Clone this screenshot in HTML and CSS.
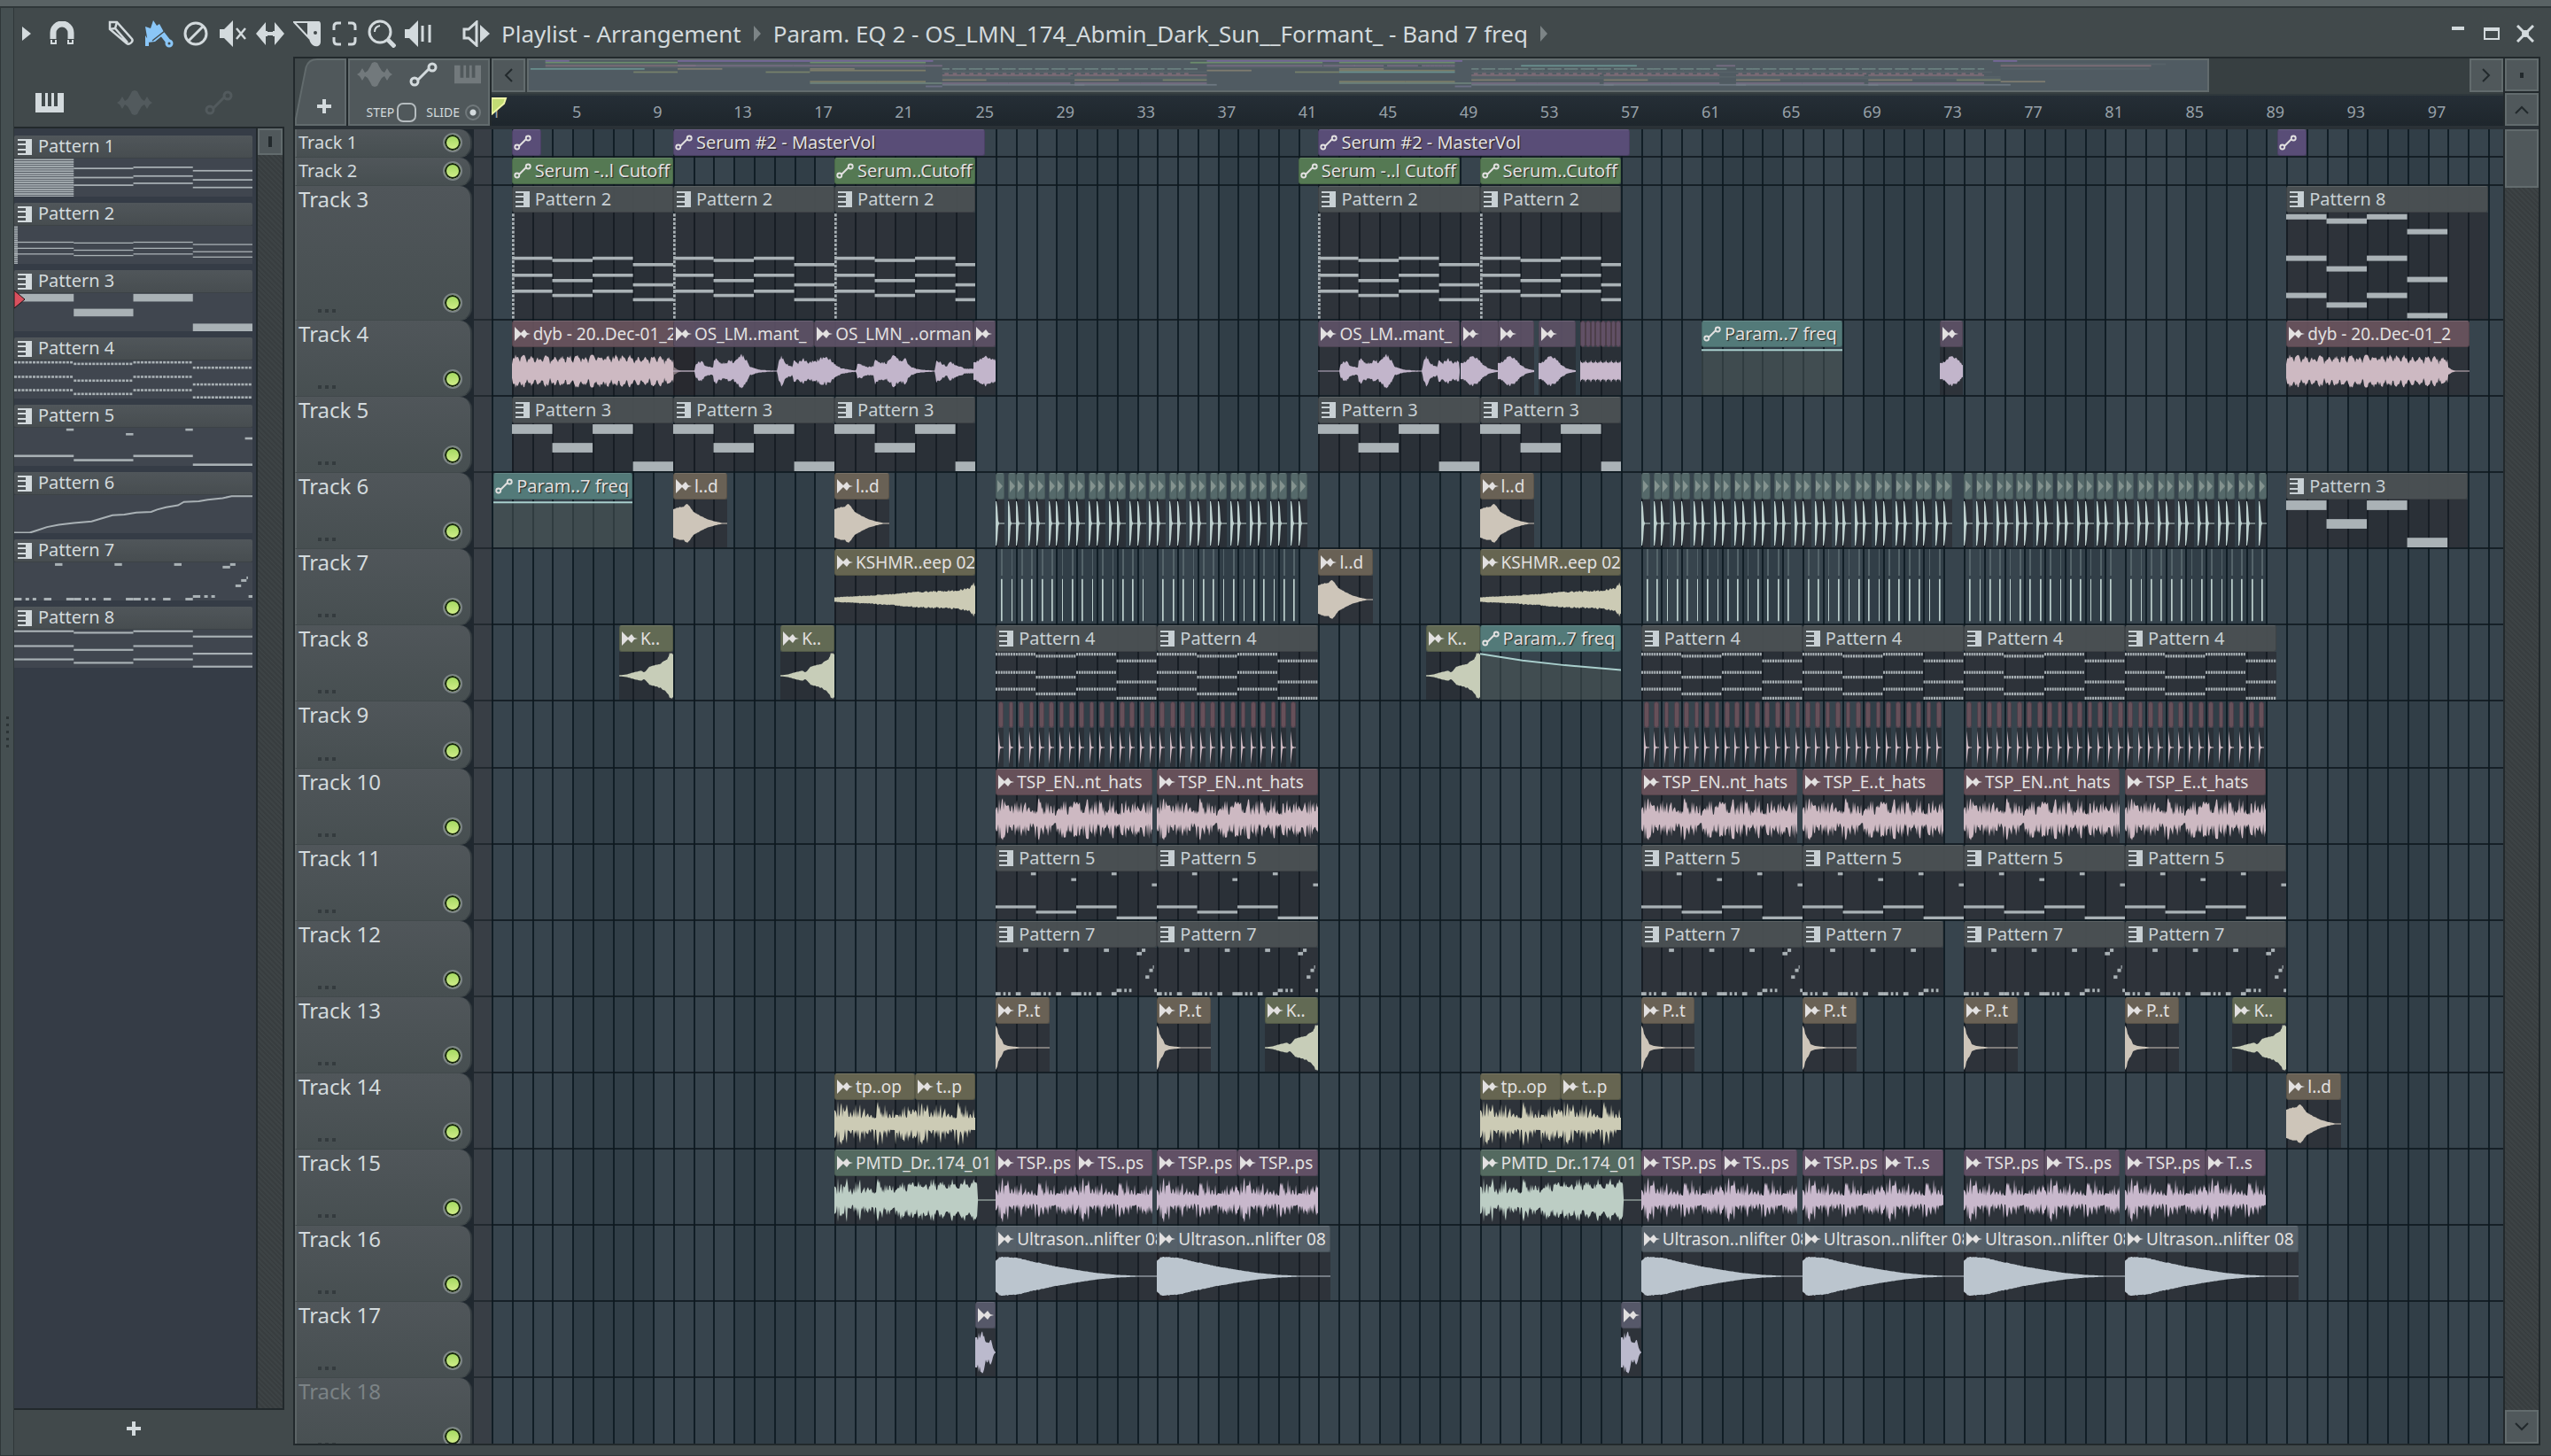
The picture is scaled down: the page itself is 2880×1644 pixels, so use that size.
FILE: index.html
```html
<!DOCTYPE html>
<html lang="en">
<head>
    <meta charset="UTF-8">
    <meta name="viewport" content="width=device-width, initial-scale=1.0">
    <title>Playlist - Arrangement</title>
    <link rel="stylesheet" href="styles.css">
</head>
<body>

<!-- Shared icons -->
<svg class="sprite" aria-hidden="true">
    <symbol id="i-auto" viewBox="0 0 32 28">
        <path d="M10 20L22 8" fill="none" stroke="currentColor" stroke-width="3"/>
        <circle cx="6" cy="22" r="4" fill="none" stroke="currentColor" stroke-width="3"/>
        <circle cx="26" cy="6" r="4" fill="none" stroke="currentColor" stroke-width="3"/>
    </symbol>
    <symbol id="i-piano" viewBox="0 0 32 22">
        <path d="M0 0h7v15h4V0h3v15h4V0h3v15h4V0h7v22H0z" fill="currentColor"/>
    </symbol>
    <symbol id="i-wave" viewBox="0 0 40 28">
        <path d="M0 14l3-2 3-5 3 5 3-2 3-5 2-4 3-1 3 1 2 4 3 5 3 2 3-5 3 5 3 2-3 2-3 5-3-5-3 2-3 5-2 4-3 1-3-1-2-4-3-5-3-2-3 5-3-5z" fill="currentColor"/>
    </symbol>
    <symbol id="i-keys" viewBox="0 0 16 18">
        <path d="M0 0h16v18H0v-2h9v-3H0v-2h9V7H0V5h9V2H0z" fill="currentColor"/>
    </symbol>
    <symbol id="i-clip" viewBox="0 0 18 16">
        <path d="M0 0l6 6 1 1 4-4 3 4 4 1-4 1-3 4-4-4-1 1-6 6z" fill="currentColor"/>
    </symbol>
</svg>

<div class="host-strip"></div>

<main class="window">
    <div class="edge"><i></i><i></i><i></i><i></i><i></i></div>
    <div class="window-body">

        <header class="titlebar">
            <button class="tool menu" aria-label="Menu"><svg width="10" height="16" viewBox="0 0 10 16"><path d="M0 0l10 8-10 8z" fill="currentColor"/></svg></button>
            <button class="tool snap" aria-label="Snap"><svg width="28" height="28" viewBox="0 0 28 28"><path d="M4 20V13a10 10 0 0 1 20 0v7" fill="none" stroke="currentColor" stroke-width="7"/><path d="M2 21v4h5v-4M21 21v4h5v-4" fill="none" stroke="currentColor" stroke-width="2"/></svg></button>
            <div class="tools">
                <button class="tool" aria-label="Draw"><svg width="30" height="30" viewBox="0 0 30 30"><path d="M2 2h8l17 19c2 3-3 7-6 5L2 10zM2 10l6-1 2-7M8 9l14 16" fill="none" stroke="currentColor" stroke-width="2.500"/></svg></button>
                <button class="tool active" aria-label="Paint"><svg width="34" height="32" viewBox="0 0 34 32"><path d="M2 8l6 2 3-9 4 6 3-2 6 11-11 9-8 1zM2 18l4 6v6H2z" fill="currentColor"/><path d="M21 16l7 9" stroke="currentColor" stroke-width="6"/><circle cx="29" cy="27" r="3" fill="none" stroke="currentColor" stroke-width="3"/><path d="M10 24l14-11" stroke="#41494b" stroke-width="1.500"/></svg></button>
                <button class="tool" aria-label="Delete"><svg width="30" height="30" viewBox="0 0 30 30"><circle cx="15" cy="15" r="12" fill="none" stroke="currentColor" stroke-width="3"/><path d="M7 23L23 7" stroke="currentColor" stroke-width="3"/></svg></button>
                <button class="tool" aria-label="Mute"><svg width="32" height="30" viewBox="0 0 32 30"><path d="M1 10h5L16 0v30L6 20H1z" fill="currentColor"/><path d="M20 9l10 12M30 9L20 21" stroke="currentColor" stroke-width="2.500"/></svg></button>
                <button class="tool" aria-label="Slip"><svg width="32" height="28" viewBox="0 0 32 28"><path d="M0 14L11 1v10h2v6h-2v10zM32 14L21 1v10h-2v6h2v10z" fill="currentColor"/><path d="M11 14h10" stroke="currentColor" stroke-width="4"/></svg></button>
                <button class="tool" aria-label="Slice"><svg width="32" height="30" viewBox="0 0 32 30"><path d="M1 2l16 17V2z" fill="none" stroke="currentColor" stroke-width="2"/><path d="M17 1h11c3 0 3 2 3 5v18c0 7-9 7-12 0l-2-6z" fill="currentColor"/><circle cx="25" cy="14" r="2" fill="#41494b"/></svg></button>
                <button class="tool" aria-label="Select"><svg width="28" height="28" viewBox="0 0 28 28"><path d="M2 10V6q0-4 4-4h4M18 2h4q4 0 4 4v4M26 18v4q0 4-4 4h-4M10 26H6q-4 0-4-4v-4" fill="none" stroke="currentColor" stroke-width="3"/></svg></button>
                <button class="tool" aria-label="Zoom"><svg width="32" height="32" viewBox="0 0 32 32"><circle cx="14" cy="14" r="12" fill="none" stroke="currentColor" stroke-width="3"/><path d="M23 23l8 8" fill="none" stroke="currentColor" stroke-width="5"/><path d="M8 14q0-6 6-7" fill="none" stroke="currentColor" stroke-width="2"/></svg></button>
                <button class="tool" aria-label="Playback"><svg width="32" height="30" viewBox="0 0 32 30"><path d="M0 10h5L15 0v30L5 20H0z" fill="currentColor"/><path d="M20 6v18M28 5v20" stroke="currentColor" stroke-width="3"/></svg></button>
            </div>
            <button class="tool play" aria-label="Arrangement menu"><svg width="32" height="30" viewBox="0 0 32 30"><path d="M2 10h5l9-8v26l-9-8H2z" fill="none" stroke="currentColor" stroke-width="3"/><path d="M20 5l11 10-11 10z" fill="currentColor"/></svg></button>
            <h1 class="crumbs">
                <span>Playlist - Arrangement</span>
                <i class="crumb-arrow"></i>
                <span>Param. EQ 2 - OS_LMN_174_Abmin_Dark_Sun__Formant_ - Band 7 freq</span>
                <i class="crumb-arrow"></i>
            </h1>
            <div class="window-buttons">
                <button class="tool" aria-label="Minimize"><svg width="20" height="20" viewBox="0 0 20 20"><path d="M3 4h14" stroke="currentColor" stroke-width="4"/></svg></button>
                <button class="tool" aria-label="Maximize"><svg width="20" height="20" viewBox="0 0 20 20"><path d="M2 4h16v12H2z" fill="none" stroke="currentColor" stroke-width="2"/><path d="M1 5h18" stroke="currentColor" stroke-width="4"/></svg></button>
                <button class="tool" aria-label="Close"><svg width="20" height="20" viewBox="0 0 20 20"><path d="M1 1l18 18M19 1L1 19" stroke="currentColor" stroke-width="3"/><circle cx="10" cy="10" r="4" fill="currentColor"/></svg></button>
            </div>
        </header>

        <div class="workspace">
            <aside class="picker">
                <div class="picker-tabs">
                    <button class="tool" aria-label="Patterns"><svg width="32" height="22"><use href="#i-piano"/></svg></button>
                    <button class="tool dim" aria-label="Audio"><svg width="40" height="28"><use href="#i-wave"/></svg></button>
                    <button class="tool dim" aria-label="Automation"><svg width="32" height="28"><use href="#i-auto"/></svg></button>
                </div>
                <div class="picker-main">
                    <ul class="pattern-list" id="pattern-list"></ul>
                    <div class="scrollbar">
                        <div class="thumb small"><i></i></div>
                    </div>
                </div>
                <button class="tool add-pattern" aria-label="Add pattern"><svg width="16" height="16" viewBox="0 0 16 16"><path d="M8 0v16M0 8h16" stroke="currentColor" stroke-width="4"/></svg></button>
            </aside>

            <section class="playlist">
                <div class="playlist-top">
                    <div class="corner">
                        <button class="add-track" aria-label="Add track">
                            <svg class="tab-shape" viewBox="0 0 60 78" preserveAspectRatio="none"><path d="M1 78V70L13 10Q16 1 26 1H59V77H1z" fill="#50585b" stroke="#626b6d" stroke-width="2"/></svg>
                            <svg class="plus" width="16" height="16" viewBox="0 0 16 16"><path d="M8 0v16M0 8h16" stroke="currentColor" stroke-width="4"/></svg>
                        </button>
                        <div class="clip-tools">
                            <div class="clip-kinds">
                                <button class="tool dim" aria-label="Audio clips"><svg width="40" height="28"><use href="#i-wave"/></svg></button>
                                <button class="tool" aria-label="Automation clips"><svg width="32" height="28"><use href="#i-auto"/></svg></button>
                                <button class="tool dim" aria-label="Pattern clips"><svg width="30" height="22"><use href="#i-piano"/></svg></button>
                            </div>
                            <div class="clip-options">
                                <label for="step">STEP</label>
                                <input type="checkbox" id="step" class="step-box">
                                <label for="slide">SLIDE</label>
                                <input type="checkbox" id="slide" class="slide-box" checked>
                            </div>
                        </div>
                    </div>
                    <div class="timeline-head">
                        <div class="nav-row">
                            <button class="nav-btn" aria-label="Scroll left"><svg width="12" height="18" viewBox="0 0 12 18"><path d="M10 2L3 9l7 7" fill="none" stroke="currentColor" stroke-width="2"/></svg></button>
                            <div class="minimap-wrap"><svg class="minimap" id="minimap" preserveAspectRatio="none"></svg></div>
                            <button class="nav-btn" aria-label="Scroll right"><svg width="12" height="18" viewBox="0 0 12 18"><path d="M2 2l7 7-7 7" fill="none" stroke="currentColor" stroke-width="2"/></svg></button>
                        </div>
                        <div class="ruler" id="ruler">
                            <svg class="playhead" width="18" height="20" viewBox="0 0 18 20"><path d="M0 1h16l-2 6L0 19z" fill="#c3dc74" stroke="#f0f5a8" stroke-width="2"/></svg>
                        </div>
                    </div>
                    <div class="scroll-head">
                        <button class="nav-btn" aria-label="Playlist size"><i class="dot"></i></button>
                        <button class="nav-btn" aria-label="Scroll up"><svg width="18" height="12" viewBox="0 0 18 12"><path d="M2 10l7-7 7 7" fill="none" stroke="currentColor" stroke-width="2"/></svg></button>
                    </div>
                </div>

                <div class="playlist-main">
                    <div class="tracks">
                        <div class="grid" id="grid"></div>
                        <div id="tracks"></div>
                    </div>
                    <div class="scrollbar wide">
                        <div class="thumb"></div>
                        <button class="nav-btn" aria-label="Scroll down"><svg width="18" height="12" viewBox="0 0 18 12"><path d="M2 2l7 7 7-7" fill="none" stroke="currentColor" stroke-width="2"/></svg></button>
                    </div>
                </div>
            </section>
        </div>
    </div>
</main>

<script src="script.js"></script>
</body>
</html>
```

FILE: styles.css
```css
* {
    box-sizing: border-box;
}

body {
    margin: 0;
    height: 100vh;
    display: flex;
    flex-direction: column;
    overflow: hidden;
    background: #41494b;
    color: #d3dadd;
    font-family: "Noto Sans", sans-serif;
    font-size: 20px;
}

button {
    padding: 0;
    border: none;
    background: none;
    color: inherit;
    font: inherit;
    cursor: pointer;
}

svg {
    display: block;
}

.sprite {
    position: absolute;
    width: 0;
    height: 0;
}

.host-strip {
    height: 9px;
    background: #596264;
    border-bottom: 2px solid #2f3739;
}

.window {
    flex: 1;
    min-height: 0;
    display: flex;
    border-left: 1px solid #2f3739;
    border-bottom: 1px solid #2f3739;
}

.edge {
    width: 15px;
    display: flex;
    flex-direction: column;
    justify-content: center;
    align-items: center;
    gap: 5px;
    background: #454f51;
    border-right: 1px solid #2f3739;
}

.edge i {
    width: 3px;
    height: 3px;
    background: #2c3436;
}

.window-body {
    flex: 1;
    min-width: 0;
    display: flex;
    flex-direction: column;
}

/* Title bar */
.titlebar {
    height: 55px;
    display: flex;
    align-items: center;
    padding: 2px 10px 0 4px;
}

.tool {
    display: flex;
    align-items: center;
    justify-content: center;
    color: #d3dadd;
}

.tool.active {
    color: #8ac6f7;
}

.tool.dim {
    color: #72797c;
}

.menu {
    width: 20px;
}

.snap {
    width: 60px;
}

.tools {
    display: flex;
    margin-left: 16px;
}

.tools .tool {
    width: 42px;
}

.play {
    width: 48px;
    margin-left: 20px;
}

.crumbs {
    flex: 1;
    display: flex;
    align-items: center;
    gap: 14px;
    margin: 0 0 0 4px;
    font-size: 26px;
    line-height: 36px;
    font-weight: normal;
    white-space: nowrap;
}

.crumb-arrow {
    border: 9px solid transparent;
    border-left: 8px solid #7c8486;
    border-right: none;
}

.window-buttons {
    display: flex;
}

.window-buttons .tool {
    width: 38px;
}

.workspace {
    flex: 1;
    min-height: 0;
    display: flex;
    gap: 10px;
    padding: 0 12px 11px 0;
}

/* Pattern picker */
.picker {
    width: 305px;
    display: flex;
    flex-direction: column;
}

.picker-tabs {
    height: 79px;
    display: flex;
    justify-content: space-between;
    align-items: center;
    padding: 24px 58px 0 24px;
}

.picker-tabs .dim {
    color: #525a5d;
}

.picker-main {
    flex: 1;
    min-height: 0;
    display: flex;
    border: 2px solid #22292c;
    border-left: none;
}

.pattern-list {
    flex: 1;
    margin: 0;
    padding: 8px 4px 0 0;
    list-style: none;
    background: #353c46;
}

.pattern {
    position: relative;
    height: 70px;
    margin-bottom: 6px;
}

.pattern-name {
    display: flex;
    align-items: center;
    gap: 7px;
    height: 26px;
    padding-left: 4px;
    line-height: 24px;
    background: linear-gradient(#50565a, #474d50);
    border-bottom: 1px solid #3c4246;
    border-radius: 2px;
}

.pattern-name span {
    height: 26px;
}

.pattern-body {
    height: 43px;
    background: #40464f;
}

.notes {
    width: 100%;
    height: 100%;
    fill: #a9b1b5;
}

.pattern-marker {
    position: absolute;
    left: 0;
    top: 22px;
}

.add-pattern {
    height: 40px;
    padding-top: 2px;
    padding-right: 36px;
}

.scrollbar {
    width: 30px;
    display: flex;
    flex-direction: column;
    border-left: 2px solid #22292c;
    background: repeating-linear-gradient(45deg, #383d3f 0, #383d3f 2px, #3d4345 2px, #3d4345 4px);
}

.scrollbar.wide {
    width: 40px;
    justify-content: space-between;
}

.thumb {
    height: 66px;
    display: flex;
    align-items: center;
    justify-content: center;
    background: #50585b;
    border: 2px solid #626b6d;
}

.thumb.small {
    height: 30px;
}

.thumb i {
    width: 4px;
    height: 12px;
    background: #22292c;
}

/* Playlist */
.playlist {
    flex: 1;
    min-width: 0;
    display: flex;
    flex-direction: column;
    border: 2px solid #22292c;
    border-top: none;
}

.playlist-top {
    height: 82px;
    display: flex;
    border-bottom: 4px solid #2a3136;
}

.corner {
    width: 222px;
    display: flex;
    gap: 2px;
    border-top: 2px solid #22292c;
    border-right: 2px solid #22292c;
    background: #22292c;
}

.add-track {
    position: relative;
    width: 58px;
    background: #41494b;
}

.tab-shape {
    width: 100%;
    height: 100%;
}

.plus {
    position: absolute;
    left: 25px;
    top: 46px;
}

.clip-tools {
    flex: 1;
    display: flex;
    flex-direction: column;
    justify-content: space-between;
    padding: 2px 8px;
    background: #50585b;
    border: 2px solid #626b6d;
}

.clip-kinds {
    display: flex;
    justify-content: space-between;
    align-items: center;
}

.clip-options {
    display: flex;
    align-items: center;
    justify-content: flex-end;
    gap: 3px;
    font-size: 14px;
    line-height: 22px;
}

.step-box,
.slide-box {
    appearance: none;
    margin: 0;
    width: 22px;
    height: 22px;
    border: 2px solid #b5bcbf;
    border-radius: 7px;
}

.step-box {
    margin-right: 8px;
}

.slide-box {
    width: 18px;
    height: 18px;
    margin-left: 3px;
    border-color: #70787b;
    border-radius: 50%;
    background: radial-gradient(circle, #d3dadd 0, #d3dadd 3px, transparent 4px);
}

.timeline-head {
    flex: 1;
    min-width: 0;
    display: flex;
    flex-direction: column;
}

.nav-row {
    height: 42px;
    display: flex;
    background: #373f41;
    border-top: 2px solid #22292c;
}

.nav-btn {
    width: 38px;
    height: 38px;
    display: flex;
    align-items: center;
    justify-content: center;
    color: #22292c;
    background: #50585b;
    border: 2px solid #626b6d;
}

.minimap-wrap {
    flex: 1;
    padding: 0 294px 2px 2px;
}

.minimap {
    width: 100%;
    height: 38px;
    background: #505b62;
    border: 2px solid #626b6d;
}

.ruler {
    position: relative;
    flex: 1;
    overflow: hidden;
    background: linear-gradient(#252e36, #1e262c);
    border-top: 2px solid #2f383c;
    color: #98a1a9;
    font-size: 18px;
    line-height: 36px;
}

/* Bar numbers sit at their bar's place on the timeline */
.ruler span {
    position: absolute;
    top: 0;
}

.playhead {
    position: absolute;
    left: 0;
    top: 2px;
    z-index: 1;
}

.scroll-head {
    width: 40px;
    display: flex;
    flex-direction: column;
    gap: 2px;
    padding-top: 2px;
    border-left: 2px solid #22292c;
    background: #22292c;
}

.dot {
    width: 4px;
    height: 6px;
    background: #22292c;
}

.playlist-main {
    flex: 1;
    min-height: 0;
    display: flex;
}

.tracks {
    position: relative;
    flex: 1;
    min-width: 0;
    overflow: hidden;
    background: #20282f;
}

.grid {
    position: absolute;
    top: 0;
    bottom: 0;
    left: 222px;
    right: 0;
    background: #313e47;
}

.grid .band {
    position: absolute;
    top: 0;
    bottom: 0;
    background: #37444d;
}

.grid .bar {
    position: absolute;
    top: 0;
    bottom: 0;
    width: 2px;
    background: #111e26;
}

.track {
    position: relative;
    display: flex;
    height: 86px;
}

.track.short {
    height: 32px;
}

.track.tall {
    height: 152px;
}

.track.snare {
    height: 76px;
}

.track-head {
    width: 200px;
    display: flex;
    flex-direction: column;
    justify-content: space-between;
    padding: 1px 0 8px 2px;
    font-size: 24px;
    line-height: 28px;
    background: linear-gradient(#50565a, #474f51);
    border-left: 2px solid #5c6466;
    border-right: 2px solid #343c40;
    border-bottom: 1px solid #41494b;
    border-radius: 0 14px 14px 0;
}

.track.short .track-head {
    flex-direction: row;
    font-size: 20px;
    padding-top: 0;
    padding-bottom: 2px;
    align-items: center;
}

.track.off .track-head {
    color: #7c8386;
}

.track-foot {
    display: flex;
    justify-content: space-between;
    align-items: flex-end;
    padding: 0 9px 0 22px;
}

.more {
    display: flex;
    gap: 4px;
}

.more i {
    width: 4px;
    height: 4px;
    background: #343b3e;
}

.led {
    appearance: none;
    width: 22px;
    height: 22px;
    margin: 0;
    border: 2px solid #7c8486;
    border-radius: 50%;
    background: linear-gradient(#9fd65c, #d6f08e);
    box-shadow: inset 0 0 0 2px #16240f;
}

.track-gap {
    width: 20px;
    background: #383e45;
    border-bottom: 2px solid #22292f;
    margin-left: 2px;
}

.lane {
    position: relative;
    flex: 1;
    border-bottom: 2px solid rgba(14, 24, 30, .8);
}

/* Clips are placed freely on the lane by their start bar */
.clip {
    position: absolute;
    top: 0;
    bottom: 0;
    display: flex;
    flex-direction: column;
    overflow: hidden;
}

.clip-name {
    flex: none;
    display: flex;
    align-items: center;
    gap: 6px;
    height: 30px;
    padding-left: 3px;
    overflow: hidden;
    white-space: nowrap;
    line-height: 28px;
    color: #e2e0e0;
    border: 1px solid rgba(0, 0, 0, .15);
    border-top-color: rgba(255, 255, 255, .1);
    border-radius: 3px;
}

.clip.audio .clip-name {
    gap: 3px;
    padding-left: 2px;
    font-size: 19px;
}

.clip.audio.sliver .clip-name,
.clip.audio.tick .clip-name {
    padding-left: 0;
}

.clip-name svg {
    flex: none;
}

.clip-body {
    flex: 1;
    min-height: 0;
    background: rgba(33, 29, 34, .42);
}

.clip-body svg {
    width: 100%;
    height: 100%;
}

.clip.auto .clip-name {
    padding-left: 1px;
    gap: 4px;
    text-shadow: 1px 1px 1px #222;
}

.clip.auto .clip-body {
    background: none;
}

.clip.sliver .clip-name {
    justify-content: center;
}

.pat .clip-name { background: rgba(74, 80, 83, .97); color: #c8d0d4; }
.pat .notes { fill: #aab2b6; }
.purple .clip-name { background: #594d77; }
.green .clip-name { background: #557953; }
.teal .clip-name { background: #537a79; }
.pink { color: #cdb9c2; }
.pink .clip-name { background: rgba(103, 82, 92, .95); }
.mauve { color: #c2b5cb; }
.mauve .clip-name { background: rgba(92, 80, 100, .95); }
.sand { color: #cdc5b9; }
.sand .clip-name { background: #696155; }
.olive { color: #cccbb5; }
.olive .clip-name { background: #666551; }
.moss { color: #c7cdb8; }
.moss .clip-name { background: #626a54; }
.mint { color: #bccfcd; }
.mint .clip-name { background: #55696a; }
.rose { color: #cdb9c2; }
.rose .clip-name { background: #665059; }
.sage { color: #bccdc4; }
.sage .clip-name { background: #546a60; }
.plum { color: #c8b8cc; }
.plum .clip-name { background: #615065; }
.steel { color: #bbc5ce; }
.steel .clip-name { background: rgba(87, 98, 106, .95); }
.slate { color: #bbbacd; }
.slate .clip-name { background: #565869; }

.clip.hit .clip-body {
    background: none;
}

.clip.hit .clip-name {
    border-width: 0;
    border-radius: 0;
    padding: 0;
    background: #55646a;
}

.clip.tick .clip-name {
    border: 1px solid #4d3f4a;
}
```

FILE: script.js
```js
const BARS = 99.75;      // bars visible in the lanes
const MAP_BARS = 101.5;  // bars shown in the overview strip

const icon = (id, w, h) => `<svg width="${w}" height="${h}"><use href="#${id}"/></svg>`;

// ---- pattern notes: [start bar, length, y %, height %] ----
function chords(rows, h, dash) {
    const out = [];
    [0, 1, 0, 2].forEach((r, i) => rows[r].forEach(y => {
        if (dash) for (let k = 0; k < 16; k++) out.push([i * 2 + k / 8, 0.09, y - h / 2, h]);
        else out.push([i * 2, 2, y - h / 2, h]);
    }));
    return out;
}

function stripes(len, step) {
    const out = [];
    for (let y = 1; y < 100; y += step) out.push([0, len, y, step * 0.7]);
    return out;
}

function pattern7() {
    const out = [];
    for (let i = 0; i < 3; i++) {
        out.push([i * 2 + 1.37, 0.25, 2, 7]);
        [[0, .25], [.38, .12], [.62, .12], [1, .25], [1.75, .25]].forEach(n => out.push([i * 2 + n[0], n[1], 93, 7]));
    }
    out.push([7, .25, 9, 7], [7.25, .18, 2, 7], [7.43, .19, 58, 7], [7.62, .18, 44, 7], [7.8, .05, 37, 7]);
    out.push([6, .25, 86, 7], [6.38, .12, 86, 7], [6.62, .12, 86, 7], [7.87, .13, 86, 7]);
    return out;
}

const patterns = {
    1: stripes(2, 6).concat([[2, 2, 24, 4], [2, 2, 48, 4], [2, 2, 68, 4], [4, 2, 21, 4], [4, 2, 44, 4], [4, 2, 63, 4], [6, 2, 30, 4], [6, 2, 54, 4], [6, 2, 74, 4]]),
    2: stripes(0.12, 4).concat(chords([[43, 59, 74], [45, 64, 78], [49, 68, 82]], 3)),
    3: [[0, 2, 2, 20], [2, 2, 41, 20], [4, 2, 2, 20], [6, 2, 80, 20]],
    4: chords([[5, 43, 78], [9, 53, 88], [19, 63, 97]], 6, true),
    5: [[0, 2, 71, 6], [2, 2, 82, 6], [4, 2, 71, 6], [6, 2, 94, 6], [1.75, .25, 2, 6], [3.75, .25, 14, 6], [5.75, .25, 2, 6], [7.75, .25, 25, 6]],
    6: [],
    7: pattern7(),
    8: chords([[4, 43, 78], [8, 53, 87], [18, 63, 97]], 5)
};

const sweep = '0,99 .52,99 .8,92 1.1,84 1.5,78 2,73 2.600,69 3,60 3.300,53 3.700,51 4.100,46 4.600,44 4.800,38 5.100,32 5.500,27 5.700,18 6.200,16 6.500,12 7,8 7.300,3 8,3';

function notes(n, bars) {
    let body = patterns[n].map(r => `<rect x="${r[0]}" y="${r[2]}" width="${r[1]}" height="${r[3]}"/>`).join('');
    if (n === 6) body = `<polyline points="${sweep}" fill="none" stroke="#a9b1b5" stroke-width="2" vector-effect="non-scaling-stroke"/>`;
    return `<svg class="notes" viewBox="0 0 ${bars} 100" preserveAspectRatio="none">${body}</svg>`;
}

// ---- waveforms: envelope points [bar, amplitude], or a function of the bar ----
const rnd = n => { const s = Math.sin(n * 127.1 + 11.7) * 43758.5453; return s - Math.floor(s); };

// n is how deep the noise cuts in, pow how rare the full peaks are
const waves = {
    dyb: { f: t => t > 8 ? Math.max(.02, .25 * Math.exp(-(t - 8) * 6)) : .3 + .45 * Math.sqrt(Math.abs(Math.sin(t * 8.3))) * (.6 + .4 * rnd(Math.floor(t * 2.64))), n: .35, pow: .5 },
    os: { p: [[0, .02], [1.06, .02], [1.1, .3], [1.4, .5], [1.6, .25], [1.9, .2], [1.98, .2], [2, .62], [2.3, .42], [2.6, .36], [2.8, .58], [3, .45], [3.35, .78], [3.6, .6], [3.8, .2], [4.2, .08], [4.7, .03], [5.15, .02], [5.25, .5], [5.38, .76], [5.6, .35], [5.9, .2], [6, .6], [6.2, .4], [6.4, .6], [6.7, .4], [7, .5]], n: .3 },
    os2: { p: [[0, .45], [.4, .6], [.8, .6], [1, .35], [1.3, .15], [1.9, .05], [2.1, .03], [2.13, .3], [2.3, .35], [2.6, .2], [2.95, .25], [3, .6], [3.3, .4], [3.6, .4], [3.95, .75], [4.2, .5], [4.5, .6], [4.8, .2], [5.2, .08], [6, .02], [6.05, .6], [6.3, .4], [6.6, .2], [6.7, .48], [7, .3], [7.5, .12], [8, .1]], n: .3 },
    tail: { p: [[0, .38], [.3, .5], [.6, .65], [.8, .6], [1.1, .5]], n: .2 },
    blob: { p: [[0, .35], [.3, .45], [.5, .65], [.85, .6], [1.1, .3], [1.4, .12], [1.9, .02]], n: .2 },
    chop: { f: t => t % .25 < .03 ? .5 : .4, n: .2 },
    down: { p: [[0, .6], [.2, .68], [.5, .7], [.7, .85], [.85, .7], [1, .5], [1.3, .35], [1.7, .18], [2.1, .08], [2.4, .02], [3, .02]], n: .06 },
    rise: { p: [[0, .1], [2, .2], [4, .34], [6, .42], [6.7, .52], [6.9, .75], [7, .6]], n: .2 },
    swell: { p: [[0, .02], [.4, .06], [.8, .17], [1.1, .22], [1.25, .14], [1.5, .4], [1.8, .48], [2.1, .55], [2.4, .75], [2.5, .98], [2.7, .98]], n: .1 },
    kick: { p: [[0, .93], [.05, .92], [.1, .6], [.12, .25], [.14, .02], [1, .02]], n: 0 },
    tick: { p: [[0, .85], [.03, .8], [.06, .1], [.12, .06], [.16, .02], [1, .02]], n: 0 },
    hats: { f: t => .5 + .4 * Math.sqrt(Math.abs(Math.sin(t * 5.2))), n: .82 },
    thump: { p: [[0, .95], [.08, .85], [.15, .55], [.3, .35], [.4, .15], [.6, .08], [1.2, .02], [3, .02]], n: .08 },
    loop: { f: t => .9 + .08 * Math.sin(t * 9), n: .74, pow: 2 },
    break: { f: t => t > 7.1 ? .02 : .82 + .14 * Math.sin(t * 12), n: .78, pow: 1.6, grow: .075 },
    tops: { f: t => .55 + .42 * rnd(Math.floor((t % 2) * 11) + 5), n: .76, pow: 1.8 },
    fall: { p: [[0, .65], [.2, .82], [1, .8], [2, .6], [3, .42], [4, .27], [5, .14], [6, .06], [7, .02], [9, .02]], n: .05 },
    vox: { p: [[0, .7], [.2, .85], [.4, .9], [.5, .5], [.65, .4], [.75, .75], [.85, .4], [.95, .05], [1, .02]], n: .4 }
};

function envelope(w, t) {
    if (w.f) return w.f(t);
    for (let i = 1; i < w.p.length; i++) {
        const a = w.p[i - 1], b = w.p[i];
        if (t <= b[0]) return a[1] + (b[1] - a[1]) * (t - a[0]) / (b[0] - a[0]);
    }
    return .02;
}

function wave(kind, bars) {
    const w = waves[kind], step = 1 / 22.75, top = [], bottom = [];
    for (let t = 0, k = 0; t <= bars + step; t += step, k++) {
        const e = envelope(w, t);
        const n = w.n - (w.grow ? w.grow * t : 0);
        const cut = seed => 1 - n * (1 - Math.pow(rnd(seed), w.pow || 1));
        const up = e <= .02 ? .02 : e * cut(k);
        const dn = e <= .02 ? .02 : e * cut(k + (k % 3 ? 0 : 500));
        top.push(`${t.toFixed(3)},${(50 - up * 50).toFixed(1)}`);
        bottom.unshift(`${t.toFixed(3)},${(50 + dn * 50).toFixed(1)}`);
    }
    return `<svg viewBox="0 0 ${bars} 100" preserveAspectRatio="none"><polygon fill="currentColor" points="${top.concat(bottom).join(' ')}"/></svg>`;
}

// ---- clips ----
const pat = (n, at, len) => ({ kind: 'pat', at, len, n, name: 'Pattern ' + n });
const auto = (cls, at, len, name, curve) => ({ kind: 'auto', cls, at, len, name, curve });
const audio = (cls, w, at, len, name, extra) => ({ kind: 'audio', cls, w, at, len, name, extra });

const flat = '0,6 100,6';
const slope = '0,4 30,18 60,28 100,38';

// each bar has a kick on the beat and one a bit past the middle
function kicks(start, count) {
    const out = [];
    for (let k = 0; k < count; k++) {
        out.push(audio('mint', 'kick', start + Math.floor(k / 2) + (k % 2 ? .61 : 0), k % 2 ? .4 : .44, null, 'small'));
    }
    return out;
}

function hits(start) {
    const out = [];
    for (let k = 0; k < 30; k++) if (k !== 15) out.push({ kind: 'hit', at: start + .27 + k / 2, len: .075 });
    return out;
}

function snares(start) {
    const out = [];
    for (let k = 0; k < 30; k++) out.push(audio('rose', 'tick', start + .14 + k / 2, .25, null, 'tick'));
    return out;
}

const drops = [26, 58, 74];

const tracks = [
    { size: 'short', clips: [auto('purple', 2, 1.45, ''), auto('purple', 10, 15.45, 'Serum #2 - MasterVol'), auto('purple', 42, 15.45, 'Serum #2 - MasterVol'), auto('purple', 89.55, 1.45, '')] },
    { size: 'short', clips: [auto('green', 2, 8, 'Serum -..l Cutoff'), auto('green', 18, 7, 'Serum..Cutoff'), auto('green', 41, 8, 'Serum -..l Cutoff'), auto('green', 50, 7, 'Serum..Cutoff')] },
    { size: 'tall', clips: [pat(2, 2, 8), pat(2, 10, 8), pat(2, 18, 7), pat(2, 42, 8), pat(2, 50, 7), pat(8, 90, 10)] },
    { clips: [
        audio('pink', 'dyb', 2, 9.1, 'dyb - 20..Dec-01_2'), audio('mauve', 'os', 10, 7, 'OS_LM..mant_'), audio('mauve', 'os2', 17, 7.9, 'OS_LMN_..orman'), audio('mauve', 'tail', 24.9, 1.1, ''),
        audio('mauve', 'os', 42, 7, 'OS_LM..mant_'), audio('mauve', 'blob', 49.05, 1.9, ''), audio('mauve', 'blob', 50.9, 1.8, ''), audio('mauve', 'blob', 52.9, 1.87, ''),
        ...[0, 1, 2, 3, 4, 5, 6, 7].map(k => audio('plum', 'chop', 55 + k / 4, .25, null, 'tick')),
        auto('teal', 61, 7, 'Param..7 freq', flat), audio('mauve', 'blob', 72.8, 1.15, ''), audio('pink', 'dyb', 90, 9.1, 'dyb - 20..Dec-01_2')
    ] },
    { clips: [pat(3, 2, 8), pat(3, 10, 8), pat(3, 18, 7), pat(3, 42, 8), pat(3, 50, 7)] },
    { clips: [auto('teal', 1.1, 6.9, 'Param..7 freq', flat), audio('sand', 'down', 10, 2.7, 'l..d'), audio('sand', 'down', 18, 2.7, 'l..d'), ...kicks(26, 31), audio('sand', 'down', 50, 2.7, 'l..d'), ...kicks(58, 31), ...kicks(74, 30), pat(3, 90, 9)] },
    { clips: [audio('olive', 'rise', 18, 7, 'KSHMR..eep 02'), audio('sand', 'down', 42, 2.7, 'l..d'), audio('olive', 'rise', 50, 7, 'KSHMR..eep 02'), ...drops.flatMap(hits)] },
    { clips: [audio('moss', 'swell', 7.33, 2.67, 'K..'), audio('moss', 'swell', 15.33, 2.67, 'K..'), pat(4, 26, 8), pat(4, 34, 8), audio('moss', 'swell', 47.33, 2.67, 'K..'), auto('teal', 50, 7, 'Param..7 freq', slope), pat(4, 58, 8), pat(4, 66, 8), pat(4, 74, 8), pat(4, 82, 7.5)] },
    { size: 'snare', clips: drops.flatMap(snares) },
    { clips: [audio('rose', 'hats', 26, 7.75, 'TSP_EN..nt_hats'), audio('rose', 'hats', 34, 8, 'TSP_EN..nt_hats'), audio('rose', 'hats', 58, 7.75, 'TSP_EN..nt_hats'), audio('rose', 'hats', 66, 7, 'TSP_E..t_hats'), audio('rose', 'hats', 74, 7.75, 'TSP_EN..nt_hats'), audio('rose', 'hats', 82, 7, 'TSP_E..t_hats')] },
    { clips: [26, 34, 58, 66, 74, 82].map(b => pat(5, b, 8)) },
    { clips: [pat(7, 26, 8), pat(7, 34, 8), pat(7, 58, 8), pat(7, 66, 7), pat(7, 74, 8), pat(7, 82, 8)] },
    { clips: [...[26, 34, 58, 66, 74, 82].map(b => audio('sand', 'thump', b, 2.67, 'P..t')), audio('moss', 'swell', 39.33, 2.67, 'K..'), audio('moss', 'swell', 87.33, 2.67, 'K..')] },
    { clips: [audio('olive', 'loop', 18, 4, 'tp..op'), audio('olive', 'loop', 22, 3, 't..p'), audio('olive', 'loop', 50, 4, 'tp..op'), audio('olive', 'loop', 54, 3, 't..p'), audio('sand', 'down', 90, 2.7, 'l..d')] },
    { clips: [
        audio('sage', 'break', 18, 8, 'PMTD_Dr..174_01'), audio('plum', 'tops', 26, 4, 'TSP..ps'), audio('plum', 'tops', 30, 3.75, 'TS..ps'), audio('plum', 'tops', 34, 4, 'TSP..ps'), audio('plum', 'tops', 38, 4, 'TSP..ps'),
        audio('sage', 'break', 50, 8, 'PMTD_Dr..174_01'), ...[58, 74].flatMap(b => [audio('plum', 'tops', b, 4, 'TSP..ps'), audio('plum', 'tops', b + 4, 3.75, 'TS..ps'), audio('plum', 'tops', b + 8, 4, 'TSP..ps'), audio('plum', 'tops', b + 12, 3, 'T..s')])
    ] },
    { clips: [26, 34, 58, 66, 74, 82].map(b => audio('steel', 'fall', b, 8.6, 'Ultrason..nlifter 08')) },
    { clips: [audio('slate', 'vox', 25, 1, ''), audio('slate', 'vox', 57, 1, '')] },
    { off: true, clips: [] }
];

const pct = bars => (bars / BARS * 100).toFixed(3) + '%';

function clipHtml(c) {
    const place = `style="left:${pct(c.at - 1)};width:${pct(c.len)}"`;
    if (c.kind === 'hit') {
        return `<div class="clip hit mint" ${place}><div class="clip-name"></div><div class="clip-body"><svg viewBox="0 0 1 100" preserveAspectRatio="none"><rect y="7" width="1" height="88" fill="currentColor"/></svg></div></div>`;
    }
    if (c.kind === 'pat') {
        return `<div class="clip pat" ${place}><div class="clip-name">${icon('i-keys', 16, 18)}<span>${c.name}</span></div><div class="clip-body">${notes(c.n, c.len)}</div></div>`;
    }
    if (c.kind === 'auto') {
        const curve = c.curve ? `<svg viewBox="0 0 100 100" preserveAspectRatio="none"><polygon points="${c.curve} 100,100 0,100" fill="rgba(75,86,86,.55)"/><polyline points="${c.curve}" fill="none" stroke="#a9cfcd" stroke-width="2" vector-effect="non-scaling-stroke"/></svg>` : '';
        return `<div class="clip auto ${c.cls}" ${place}><div class="clip-name">${icon('i-auto', 20, 20)}<span>${c.name}</span></div><div class="clip-body">${curve}</div></div>`;
    }
    let head = '';
    if (c.extra === 'small') head = '<svg width="6" height="14" viewBox="0 0 6 14"><path d="M0 0l6 7-6 7z" fill="#84938f"/></svg>';
    else if (c.extra !== 'tick') head = icon('i-clip', 18, 16) + `<span>${c.name}</span>`;
    const cls = c.extra === 'tick' ? 'tick' : c.extra === 'small' ? 'sliver' : '';
    return `<div class="clip audio ${c.cls} ${cls}" ${place}><div class="clip-name">${head}</div><div class="clip-body">${wave(c.w, c.len)}</div></div>`;
}

document.getElementById('tracks').innerHTML = tracks.map((t, i) => {
    const led = `<input type="checkbox" class="led" aria-label="Track ${i + 1} on" checked>`;
    const foot = t.size === 'short' ? led : `<span class="more"><i></i><i></i><i></i></span>${led}`;
    return `<div class="track ${t.size || ''} ${t.off ? 'off' : ''}">
        <div class="track-head"><span>Track ${i + 1}</span><div class="track-foot">${foot}</div></div>
        <div class="track-gap"></div>
        <div class="lane">${t.clips.map(clipHtml).join('')}</div>
    </div>`;
}).join('');

// ---- pattern picker ----
document.getElementById('pattern-list').innerHTML = [1, 2, 3, 4, 5, 6, 7, 8].map(n => `<li class="pattern">
    <div class="pattern-name">${icon('i-keys', 16, 18)}<span>Pattern ${n}</span></div>
    <div class="pattern-body">${notes(n, 8)}</div>
    ${n === 3 ? '<svg class="pattern-marker" width="13" height="22" viewBox="0 0 13 22"><path d="M0 1l12 10-12 10z" fill="#d9505e" stroke="#1c1416"/></svg>' : ''}
</li>`).join('');

// ---- bar numbers and grid lines ----
let ruler = '', grid = '';
for (let b = 1; b <= 100; b++) {
    if (b % 4 === 1 && b < 98) ruler += `<span style="left:${pct(b - 1)}">${b}</span>`;
    grid += `<i class="bar" style="left:${pct(b - 1)}"></i>`;
}
let bands = '';
for (let b = 1; b <= 100; b += 8) bands += `<i class="band" style="left:${pct(b - 1)};width:${pct(4)}"></i>`;
document.getElementById('ruler').insertAdjacentHTML('beforeend', ruler);
document.getElementById('grid').innerHTML = bands + grid;

// ---- overview strip ----
const mapColors = { purple: '#7d6aa6', green: '#739a6e', teal: '#6f9c9a', pink: '#87707c', mauve: '#7f7189', sand: '#8a8474', olive: '#86866c', moss: '#7f8a6e', mint: '#728a88', rose: '#87707c', sage: '#728a80', plum: '#80708a', steel: '#74808a', slate: '#747690' };
const map = document.getElementById('minimap');
map.setAttribute('viewBox', `0 0 ${MAP_BARS} 38`);
map.innerHTML = tracks.map((t, i) => t.clips.map(c => {
    const fill = mapColors[c.cls] || '#59646a';
    return `<rect x="${c.at - 1}" y="${i * 2}" width="${c.len}" height="2" fill="${fill}" opacity=".8"/>`;
}).join('')).join('');
```
